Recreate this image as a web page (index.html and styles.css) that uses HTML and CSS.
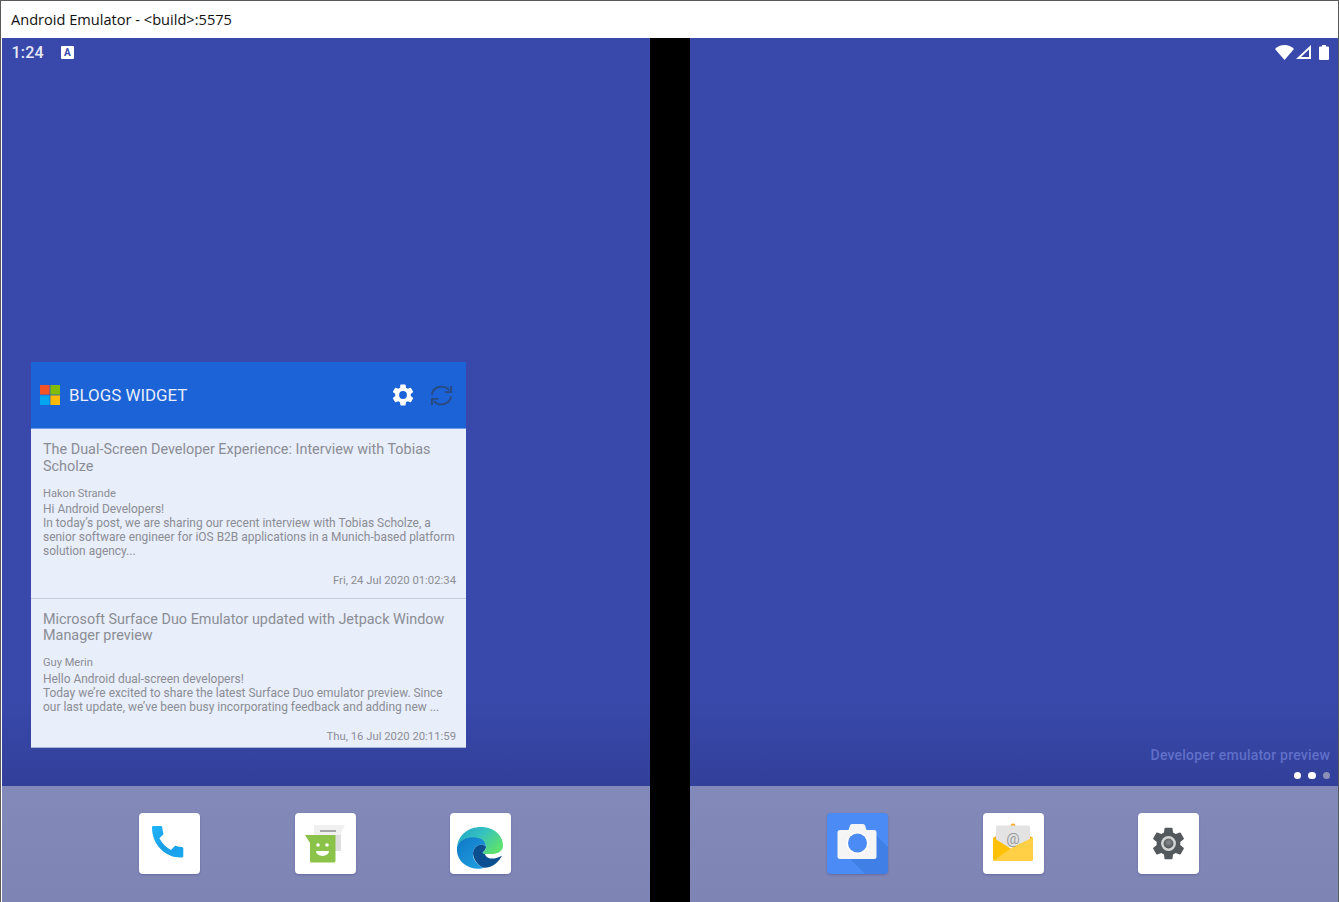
FILE: index.html
```html
<!DOCTYPE html>
<html lang="en">
<head>
  <meta charset="UTF-8">
  <title>Android Emulator - &lt;build&gt;:5575</title>
  <link rel="stylesheet" href="styles.css">
</head>
<body>
  <div class="window">
    <div class="titlebar">Android Emulator - &lt;build&gt;:5575</div>
    <div class="device">

      <!-- left screen -->
      <div class="screen">
        <div class="status-bar">
          <span class="clock">1:24</span>
          <span class="keyboard-badge">A</span>
        </div>
        <div class="home home-left">
          <div class="widget">
            <div class="widget-header">
              <svg class="ms-logo" viewBox="0 0 20 20">
                <rect x="0" y="0" width="9.6" height="9.6" fill="#f35325"/>
                <rect x="10.4" y="0" width="9.6" height="9.6" fill="#81bc06"/>
                <rect x="0" y="10.4" width="9.6" height="9.6" fill="#05a6f0"/>
                <rect x="10.4" y="10.4" width="9.6" height="9.6" fill="#ffba08"/>
              </svg>
              <span class="widget-title">BLOGS WIDGET</span>
              <svg class="widget-gear" viewBox="0 0 24 24">
                <path fill="#fff" d="M19.14 12.94c.04-.3.06-.61.06-.94 0-.32-.02-.64-.07-.94l2.03-1.58a.49.49 0 0 0 .12-.61l-1.92-3.32a.49.49 0 0 0-.59-.22l-2.39.96c-.5-.38-1.03-.7-1.62-.94l-.36-2.54a.48.48 0 0 0-.48-.41h-3.84c-.24 0-.43.17-.47.41l-.36 2.54c-.59.24-1.13.57-1.62.94l-2.39-.96a.49.49 0 0 0-.59.22L2.74 8.87c-.12.21-.08.47.12.61l2.03 1.58c-.05.3-.09.63-.09.94s.02.64.07.94l-2.03 1.58a.49.49 0 0 0-.12.61l1.92 3.32c.12.22.37.29.59.22l2.39-.96c.5.38 1.03.7 1.62.94l.36 2.54c.05.24.24.41.48.41h3.84c.24 0 .44-.17.47-.41l.36-2.54c.59-.24 1.13-.56 1.62-.94l2.39.96c.22.08.47 0 .59-.22l1.92-3.32c.12-.22.07-.47-.12-.61l-2.01-1.58zM12 15.6A3.6 3.6 0 1 1 12 8.4a3.6 3.6 0 0 1 0 7.2z"/>
              </svg>
              <svg class="widget-refresh" viewBox="0 0 24 24" fill="none" stroke="#2a4a80" stroke-width="2">
                <path d="M2 11a10 9 0 0 1 18-4.500"/>
                <path d="M22 13a10 9 0 0 1-18 4.500"/>
                <path d="M22 2v6.500h-6.500"/>
                <path d="M2 22v-6.500h6.500"/>
              </svg>
            </div>
            <div class="post post-first">
              <div class="post-title">The Dual-Screen Developer Experience: Interview with Tobias Scholze</div>
              <div class="post-author">Hakon Strande</div>
              <div class="post-body">Hi Android Developers!<br>In today’s post, we are sharing our recent interview with Tobias Scholze, a senior software engineer for iOS B2B applications in a Munich-based platform solution agency...</div>
              <div class="post-date">Fri, 24 Jul 2020 01:02:34</div>
            </div>
            <div class="post post-second">
              <div class="post-title">Microsoft Surface Duo Emulator updated with Jetpack Window Manager preview</div>
              <div class="post-author">Guy Merin</div>
              <div class="post-body">Hello Android dual-screen developers!<br>Today we’re excited to share the latest Surface Duo emulator preview. Since our last update, we’ve been busy incorporating feedback and adding new ...</div>
              <div class="post-date">Thu, 16 Jul 2020 20:11:59</div>
            </div>
          </div>
        </div>
        <div class="dock">
          <div class="app-icon">
            <svg viewBox="0 0 61 61">
              <defs>
                <linearGradient id="phoneGrad" x1="0" y1="0" x2="1" y2="1">
                  <stop offset="0" stop-color="#1eb4fa"/>
                  <stop offset="0.55" stop-color="#1a9ee6"/>
                  <stop offset="1" stop-color="#18a8f2"/>
                </linearGradient>
              </defs>
              <path fill="url(#phoneGrad)" d="M13 14.500c0-.8.6-1.500 1.500-1.500h7.300c.8 0 1.400.6 1.500 1.400.1 2 .5 4 1.100 5.800.2.5 0 1.100-.4 1.500l-3.600 3.600c2.500 5 6.600 9.100 11.600 11.600l3.600-3.600c.4-.4 1-.5 1.500-.4 1.800.6 3.800 1 5.800 1.100.8.100 1.400.7 1.400 1.500v7.500c0 .8-.7 1.500-1.500 1.500C25.500 45 13 31 13 14.500z"/>
            </svg>
          </div>
          <div class="app-icon">
            <svg viewBox="0 0 61 61">
              <path fill="#f0f0f0" d="M19 12h31l-4 8v18H19z"/>
              <path fill="#dedede" d="M40 22h6v16h-6z"/>
              <rect x="25" y="17" width="16" height="2" fill="#a6a6a6"/>
              <path fill="#8bc34a" d="M10 22h30.500v26a1.500 1.500 0 0 1-1.500 1.500H16.500a1.500 1.500 0 0 1-1.500-1.500V30z"/>
              <circle cx="23" cy="32" r="1.800" fill="#fff"/>
              <circle cx="32" cy="32" r="1.800" fill="#fff"/>
              <path fill="#fff" d="M21 38h13a6.500 5 0 0 1-13 0z"/>
            </svg>
          </div>
          <div class="app-icon">
            <svg viewBox="0 0 61 61">
              <defs>
                <linearGradient id="edgeTop" x1="0" y1="0" x2="1" y2="0.6">
                  <stop offset="0" stop-color="#1f9fc9"/>
                  <stop offset="0.5" stop-color="#35c1c0"/>
                  <stop offset="1" stop-color="#5ce070"/>
                </linearGradient>
                <linearGradient id="edgeBlue" x1="0" y1="0" x2="0.8" y2="1">
                  <stop offset="0" stop-color="#0f77c5"/>
                  <stop offset="1" stop-color="#1f9ee0"/>
                </linearGradient>
              </defs>
              <g transform="translate(0 6.500) scale(1 0.93)">
                <path fill="url(#edgeTop)" d="M7 30C8 17 18 8 31 8c13 0 22 9 22 20 0 6-5 9-10 9h-8c-2 0-3-1-2-2 2-1.500 3-3.500 3-6 0-6-6-9-13-9C16 20 8 24 7 30z"/>
                <path fill="url(#edgeBlue)" d="M7 30c1-7 9-11 16-11 8 0 13 4 13 10-4-4-12-2-13 7-1 6 4 13 11 16-1 .5-3 1-4 1C15 53 6 43 7 30z"/>
                <path fill="#0c4f90" d="M23 36c1-9 9-11 13-7 0 2-1 4-3 6-1 1 0 2 2 2 1 4 6 8 17 2-3 6-9 13-18 13-7-3-11-10-11-16z"/>
              </g>
            </svg>
          </div>
        </div>
      </div>

      <div class="hinge"></div>

      <!-- right screen -->
      <div class="screen">
        <div class="status-bar status-right">
          <svg class="wifi" viewBox="0 0 19 15"><path fill="#fff" d="M0 4C2.500 1.500 5.800 0 9.500 0s7 1.500 9.500 4L9.500 15z"/></svg>
          <svg class="signal" viewBox="0 0 15 14"><path fill="#fff" d="M15 0v14H0zM13 4.500 5 12h8z"/></svg>
          <svg class="battery" viewBox="0 0 10 15"><path fill="#fff" d="M3 0h4v1.500h2a1 1 0 0 1 1 1V14a1 1 0 0 1-1 1H1a1 1 0 0 1-1-1V2.500a1 1 0 0 1 1-1h2z"/></svg>
        </div>
        <div class="home home-right">
          <div class="preview-label">Developer emulator preview</div>
          <div class="page-dots">
            <span class="dot"></span>
            <span class="dot"></span>
            <span class="dot dot-dim"></span>
          </div>
        </div>
        <div class="dock">
          <div class="app-icon app-icon-camera">
            <svg viewBox="0 0 61 61">
              <path fill="#4080e6" d="M22 45 38 61h19a4 4 0 0 0 4-4V34L49 22v23z"/>
              <path fill="#f5f5f5" d="M25 11h11a2 2 0 0 1 2 1.500L39.500 17H47a2.500 2.500 0 0 1 2.500 2.500v24A2.500 2.500 0 0 1 47 46H13a2.500 2.500 0 0 1-2.500-2.500v-24A2.500 2.500 0 0 1 13 17h8.500L23 12.500A2 2 0 0 1 25 11z"/>
              <circle cx="30.500" cy="30.500" r="11" fill="#fff"/>
              <circle cx="30.500" cy="30" r="9.500" fill="#4a8bf5"/>
            </svg>
          </div>
          <div class="app-icon">
            <svg viewBox="0 0 61 61">
              <circle cx="30" cy="13" r="2.500" fill="#ffa726"/>
              <path fill="#ffa726" d="M10 25 30 12l20 13v8H10z"/>
              <path fill="#e3e3e3" d="M13 14a1.500 1.500 0 0 1 1.500-1.500h31A1.500 1.500 0 0 1 47 14v20H13z"/>
              <path fill="#ffc107" d="M10 24.500 30 37l20-12.500V46a2 2 0 0 1-2 2H12a2 2 0 0 1-2-2z"/>
              <path fill="#ffd045" d="M50 24.500V46a2 2 0 0 1-2 2H12l-1-.5L30 34z"/>
              <text class="mail-at" x="30" y="31" text-anchor="middle">@</text>
            </svg>
          </div>
          <div class="app-icon">
            <svg viewBox="0 0 61 61">
              <defs>
                <radialGradient id="hubGrad" cx="0.5" cy="0.4" r="0.7">
                  <stop offset="0" stop-color="#8a8d90"/>
                  <stop offset="1" stop-color="#45494d"/>
                </radialGradient>
              </defs>
              <g transform="translate(30.500 30.500) scale(1.650) translate(-12 -12)">
                <path fill="#54595e" d="M19.140 12.940c.04-.3.06-.61.06-.94 0-.32-.02-.64-.07-.94l2.030-1.580a.49.49 0 0 0 .12-.61l-1.920-3.320a.49.49 0 0 0-.59-.22l-2.390.96c-.5-.38-1.030-.7-1.620-.94l-.36-2.540a.48.48 0 0 0-.48-.41h-3.840c-.24 0-.43.17-.47.41l-.36 2.540c-.59.24-1.130.57-1.620.94l-2.390-.96a.49.49 0 0 0-.59.22L2.740 8.870c-.12.21-.08.47.12.61l2.030 1.580c-.05.3-.09.63-.09.94s.02.64.07.94l-2.030 1.580a.49.49 0 0 0-.12.61l1.920 3.320c.12.22.37.29.59.22l2.390-.96c.5.38 1.030.7 1.620.94l.36 2.540c.05.24.24.41.48.41h3.840c.24 0 .44-.17.47-.41l.36-2.540c.59-.24 1.130-.56 1.620-.94l2.390.96c.22.08.47 0 .59-.22l1.920-3.320c.12-.22.07-.47-.12-.61z"/>
                <circle cx="12" cy="12" r="4.500" fill="#d5d6d6"/>
                <circle cx="12" cy="12" r="3" fill="url(#hubGrad)"/>
              </g>
            </svg>
          </div>
        </div>
      </div>

    </div>
  </div>
</body>
</html>
```

FILE: styles.css
```css
html, body {
  margin: 0;
  height: 902px;
  overflow: hidden;
}
body {
  font-family: Roboto, sans-serif;
  background: #fff;
}
.window {
  height: 902px;
  box-sizing: border-box;
  border-top: 1px solid #5a5a5a;
  border-left: 1px solid #5a5a5a;
  border-right: 1px solid #5a5a5a;
  display: flex;
  flex-direction: column;
}
.titlebar {
  height: 37px;
  padding-left: 10px;
  line-height: 37px;
  font-family: "Open Sans", sans-serif;
  font-size: 14.600px;
  color: #111;
  background: #fff;
  flex: none;
}
.device {
  flex: 1;
  display: flex;
  padding-left: 1px;
  background: #fff;
  min-height: 0;
}
.screen {
  width: 648px;
  display: flex;
  flex-direction: column;
  background: linear-gradient(#3949ab 0, #3949ab 660px, #32409a 748px);
}
.hinge {
  width: 40px;
  background: #000;
}
.status-bar {
  height: 28px;
  display: flex;
  align-items: center;
  padding: 0 9.500px;
  color: #e8eaf6;
  flex: none;
}
.clock {
  font-size: 16px;
  font-weight: 500;
  letter-spacing: 0.2px;
}
.keyboard-badge {
  width: 13px;
  height: 13px;
  margin-left: 17px;
  border-radius: 1px;
  background: #fff;
  color: #3949ab;
  font-size: 10px;
  font-weight: 700;
  line-height: 13px;
  text-align: center;
}
.status-right {
  justify-content: flex-end;
  padding: 0 9px 0 0;
}
.wifi {
  width: 19px;
  height: 15px;
}
.signal {
  width: 15px;
  height: 14px;
  margin-left: 2px;
}
.battery {
  width: 10px;
  height: 15px;
  margin-left: 8px;
}
.home {
  flex: 1;
  min-height: 0;
}
.home-left {
  padding: 296px 0 0 29px;
}
.home-right {
  display: flex;
  flex-direction: column;
  align-items: flex-end;
  justify-content: flex-end;
  padding: 0 8px 7px 0;
}
.preview-label {
  font-size: 14px;
  font-weight: 500;
  color: #6070c8;
  letter-spacing: 0.2px;
}
.page-dots {
  display: flex;
  gap: 7px;
  margin-top: 9px;
}
.dot {
  width: 7.500px;
  height: 7.500px;
  border-radius: 50%;
  background: #fff;
}
.dot-dim {
  background: #8a90b8;
}
.widget {
  width: 435px;
  background: #e8eefa;
  color: #8b8d95;
}
.widget-header {
  height: 67px;
  box-sizing: border-box;
  display: flex;
  align-items: center;
  padding: 0 13px 0 9px;
  background: #1b63d6;
  border-bottom: 1px solid #6f9ee8;
}
.ms-logo {
  width: 20px;
  height: 20px;
  flex: none;
}
.widget-title {
  margin-left: 9px;
  flex: 1;
  font-size: 16.900px;
  color: #e8eefa;
}
.widget-gear {
  width: 26px;
  height: 26px;
  margin-right: 14px;
}
.widget-refresh {
  width: 23px;
  height: 23px;
}
.post {
  box-sizing: border-box;
  padding: 13px 8px 0 12px;
}
.post-first {
  height: 170px;
  border-bottom: 1.500px solid #c5ccdc;
}
.post-second {
  height: 149px;
  padding-top: 12.500px;
  border-bottom: 1px solid #a9b4d6;
}
.post-title {
  font-size: 14.400px;
  line-height: 16.500px;
}
.post-author {
  margin-top: 11px;
  font-size: 11.100px;
  line-height: 16px;
}
.post-second .post-author {
  margin-top: 10px;
  margin-bottom: 1px;
}
.post-body {
  font-size: 11.960px;
  line-height: 14px;
}
.post-date {
  margin-top: 15px;
  padding-right: 2px;
  font-size: 11.300px;
  line-height: 16px;
  text-align: right;
}
.dock {
  height: 116px;
  flex: none;
  display: flex;
  box-sizing: border-box;
  padding: 27px 0 0 137px;
  gap: 94.500px;
  background: #8086b6;
  background-image: linear-gradient(#8389b9, #7e84b4);
}
.app-icon {
  width: 61px;
  height: 61px;
  flex: none;
  background: #fff;
  border-radius: 4px;
  overflow: hidden;
  box-shadow: 0 1px 2px rgba(40, 50, 110, 0.3);
}
.app-icon svg {
  display: block;
  width: 61px;
  height: 61px;
}
.app-icon-camera {
  background: #4a8bf5;
}
.mail-at {
  font-family: Roboto, sans-serif;
  font-size: 15px;
  fill: #9a9a9a;
}
```
